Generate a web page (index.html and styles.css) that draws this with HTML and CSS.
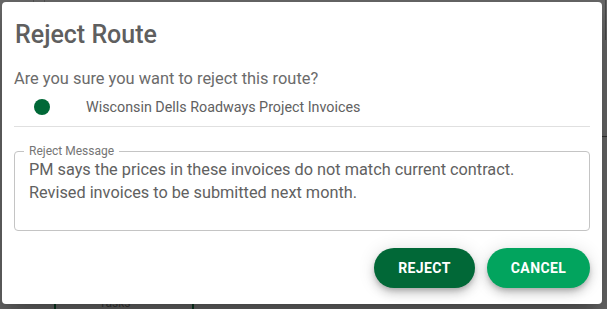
FILE: index.html
```html
<!DOCTYPE html>
<html>
<head>
<meta charset="utf-8">
<link rel="stylesheet" href="styles.css">
</head>
<body>
<div class="backdrop">
  <span class="bg-line l1"></span>
  <span class="bg-line l2"></span>
  <span class="bg-line l3 green"></span>
  <span class="bg-line l4 green"></span>
  <span class="bg-line l5"></span>
  <span class="bg-hline"></span>
  <span class="bg-tasks">Tasks</span>
</div>
<div class="dialog" role="dialog">
  <h2 class="title">Reject Route</h2>
  <p class="question">Are you sure you want to reject this route?</p>
  <div class="item">
    <span class="dot"></span>
    <span class="item-name">Wisconsin Dells Roadways Project Invoices</span>
  </div>
  <hr class="divider">
  <div class="field">
    <label class="field-label" for="msg">Reject Message</label>
    <textarea id="msg" class="field-input" rows="3">PM says the prices in these invoices do not match current contract.
Revised invoices to be submitted next month.</textarea>
  </div>
  <div class="actions">
    <button class="btn btn-reject">Reject</button>
    <button class="btn btn-cancel">Cancel</button>
  </div>
</div>
</body>
</html>
```

FILE: styles.css
```css
html, body {
  margin: 0;
  padding: 0;
  width: 607px;
  height: 309px;
  overflow: hidden;
}
body {
  background: #6a6a6a;
  font-family: Roboto, "Noto Sans", Arial, sans-serif;
  position: relative;
}
.backdrop {
  position: absolute;
  inset: 0;
  z-index: 0;
}
.bg-line {
  position: absolute;
  width: 1px;
  background: #555;
}
.bg-line.green { background: #0c3a22; width: 2px; }
.l1 { left: 33px; top: 0; height: 3px; }
.l2 { left: 44px; top: 0; height: 3px; }
.l3 { left: 54px; top: 303px; height: 6px; }
.l4 { left: 192px; top: 303px; height: 6px; }
.l5 { left: 605px; top: 0; height: 40px; background: #4a4a4a; }
.bg-hline {
  position: absolute;
  left: 602px; top: 136px; width: 5px; height: 1px; background: #333;
}
.bg-tasks {
  position: absolute;
  left: 99px; top: 298px;
  font-size: 12px;
  line-height: 11px;
  color: #3a3a3a;
}
.dialog {
  position: relative;
  z-index: 1;
  box-sizing: border-box;
  width: 600px;
  height: 302px;
  margin: 2px 0 0 2px;
  padding: 0 12px;
  background: #fff;
  border-radius: 4px;
  box-shadow: 0 11px 15px -7px rgba(0,0,0,.2), 0 24px 38px 3px rgba(0,0,0,.14), 0 9px 46px 8px rgba(0,0,0,.12);
  display: flex;
  flex-direction: column;
}
.title {
  margin: 17px 0 0 1px;
  font-size: 25px;
  line-height: 32px;
  font-weight: 500;
  color: #5f5f5f;
}
.question {
  margin: 16px 0 0 0;
  font-size: 16.4px;
  line-height: 24px;
  color: #6b6b6b;
}
.item {
  margin-top: 6px;
  display: flex;
  align-items: center;
  height: 20px;
}
.dot {
  width: 16px;
  height: 16px;
  border-radius: 50%;
  background: #006837;
  margin-left: 20px;
  flex: none;
}
.item-name {
  margin-left: 36px;
  font-size: 14.3px;
  line-height: 20px;
  color: #616161;
}
.divider {
  margin: 9px 0 0 0;
  border: 0;
  height: 1px;
  background: #e0e0e0;
}
.field {
  position: relative;
  margin-top: 24px;
  border: 1px solid #c4c4c4;
  border-radius: 4px;
  height: 80px;
  box-sizing: border-box;
}
.field-label {
  position: absolute;
  left: 9px;
  top: -8px;
  padding: 0 5px;
  background: #fff;
  font-size: 12px;
  line-height: 14px;
  color: #757575;
}
.field-input {
  display: block;
  box-sizing: border-box;
  width: 100%;
  height: 100%;
  margin: 0;
  border: 0;
  padding: 6px 14px 0 14px;
  resize: none;
  overflow: hidden;
  outline: none;
  background: transparent;
  font-family: Roboto, "Noto Sans", Arial, sans-serif;
  font-size: 16.3px;
  line-height: 23px;
  color: #616161;
}
.actions {
  margin-top: 17px;
  display: flex;
  justify-content: flex-end;
  gap: 12px;
}
.btn {
  height: 40px;
  border: 0;
  border-radius: 20px;
  padding: 0;
  font-family: Roboto, "Noto Sans", Arial, sans-serif;
  font-size: 14px;
  font-weight: 700;
  letter-spacing: 0.4px;
  text-transform: uppercase;
  color: #fff;
  box-shadow: 0 3px 5px -1px rgba(0,0,0,.2), 0 6px 10px 0 rgba(0,0,0,.14), 0 1px 18px 0 rgba(0,0,0,.12);
}
.btn-reject { background: #016837; width: 101px; }
.btn-cancel { background: #02a45e; width: 103px; }
```
